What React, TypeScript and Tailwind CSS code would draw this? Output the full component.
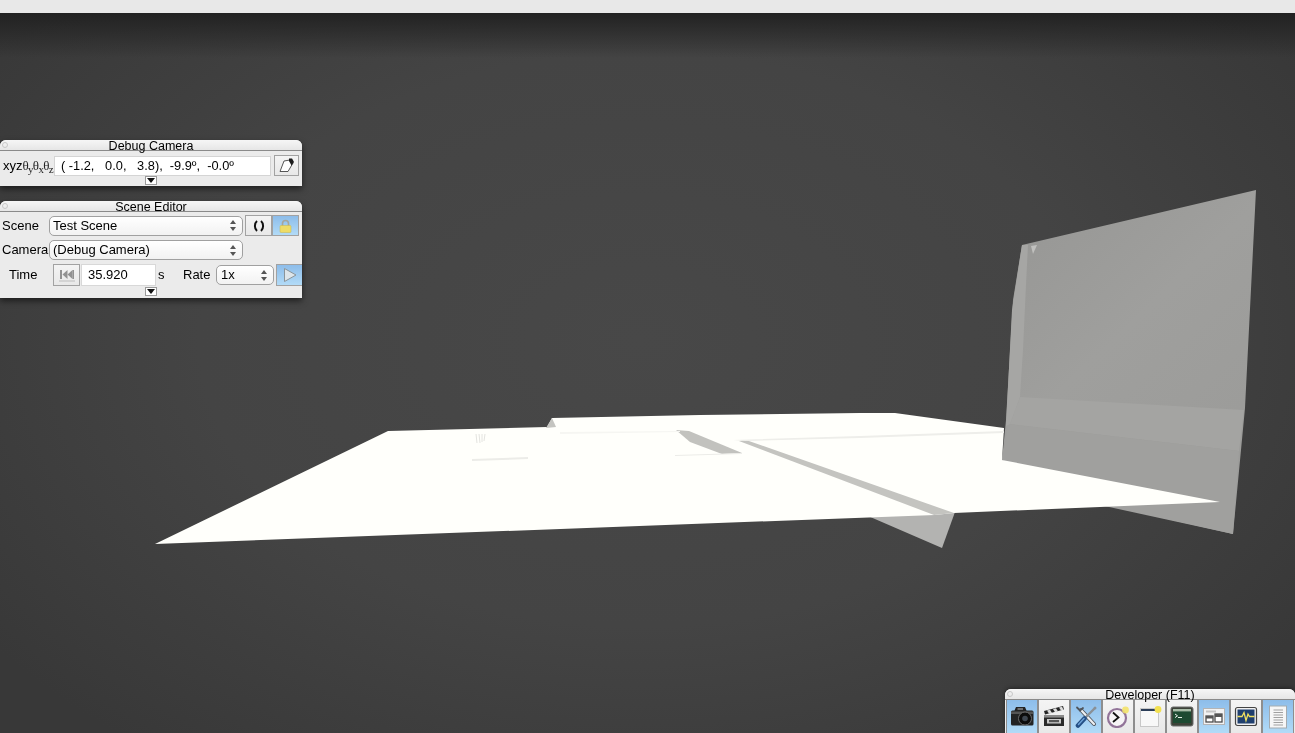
import React from "react";

const font = "font-['Liberation_Sans',Arial,sans-serif]";

function Scene() {
  return (
    <svg className="absolute left-0 top-0" width="1295" height="733" viewBox="0 0 1295 733">
      <defs>
        <linearGradient id="wall" x1="1040" y1="220" x2="1230" y2="420" gradientUnits="userSpaceOnUse">
          <stop offset="0" stopColor="#989896" />
          <stop offset="0.5" stopColor="#9f9f9d" />
          <stop offset="1" stopColor="#9c9c9a" />
        </linearGradient>
      </defs>
      {/* flaps under the floor */}
      <polygon points="868,516 955,512 942,548" fill="#b3b3b1" />
      <polygon points="1115,507 1222,501 1233,534" fill="#9c9c9a" />
      {/* wall */}
      <polygon points="1022,245 1256,190 1245,408 1233,534 1002,460 1006,420 1013,300" fill="url(#wall)" />
      <polygon points="1020,397 1244,410 1239,451 1010,424" fill="#a4a4a2" />
      <polygon points="1008,424 1239,451 1233,534 1100,505 1002,460" fill="#a0a09e" />
      <polygon points="1022,245 1028,245 1026,285 1023,350 1020,397 1010,424 1006,426 1012,310" fill="#a6a6a4" />
      <polygon points="1031,246 1037,245 1033,254" fill="#c0c0be" />
      {/* floor */}
      <polygon
        points="155,544 388,431 547,427 552,418 700,415 860,413 895,413 1004,428 1002,460 1220,502 1100,507 954,513 935,515"
        fill="#fffffb"
      />
      <polygon points="546,428 552,418 556,427" fill="#c4c4c0" />
      {/* creases */}
      <polygon points="676,430 689,431 742,453 722,454 690,442" fill="#c2c2be" />
      <polygon points="739,441 746,440 954,513 934,515" fill="#c4c4c0" />
      <polygon points="733,440 860,436 1004,431 1004,433 860,438 745,441" fill="#eeeeea" />
      <polygon points="472,459 528,457 528,459 472,461" fill="#ecece8" />
      <polygon points="675,455 742,453 742,454 675,456" fill="#ecece8" />
      <polygon points="560,432 680,431 680,432 560,434" fill="#f6f6f2" />
      <path d="M476 434 L477 443 M479 434 L480 443 M482 434 L482 442 M485 434 L484 441" stroke="#e4e4e0" strokeWidth="1" fill="none" />
    </svg>
  );
}

function TitleBar({ title }: { title: string }) {
  return (
    <div className="relative h-[11px] rounded-t-[6px] border-b border-[#8a8a8a] bg-gradient-to-b from-[#f6f6f6] to-[#e6e6e6] text-center text-[12.5px] leading-[12px] text-black">
      <span className="absolute left-[2px] top-[2px] h-[6px] w-[6px] rounded-full border border-[#c8c8c8]" />
      {title}
    </div>
  );
}

function Disclosure() {
  return (
    <div className="flex h-[9px] w-[12px] items-center justify-center border border-[#9a9a9a] bg-white">
      <svg width="8" height="5" viewBox="0 0 8 5">
        <polygon points="0,0 8,0 4,5" fill="#111" />
      </svg>
    </div>
  );
}

function Stepper() {
  return (
    <svg width="6" height="11" viewBox="0 0 6 11" className="shrink-0">
      <polygon points="3,0 6,4 0,4" fill="#555" />
      <polygon points="0,7 6,7 3,11" fill="#555" />
    </svg>
  );
}

function Select({ label, className }: { label: string; className: string }) {
  return (
    <div
      className={`flex h-[20px] items-center justify-between rounded-[5px] border border-[#a0a0a0] bg-gradient-to-b from-white to-[#f2f2f2] pl-[3px] pr-[6px] text-[13px] text-black ${className}`}
    >
      <span>{label}</span>
      <Stepper />
    </div>
  );
}

const blue = "bg-gradient-to-b from-[#8dbdea] to-[#b2dbf7]";
const plain = "bg-gradient-to-b from-[#f4f4f4] to-[#e8e8e8]";

function SmallButton({ on, className, children }: { on?: boolean; className: string; children: React.ReactNode }) {
  return (
    <div className={`flex items-center justify-center border border-[#a2a2a2] ${on ? blue : plain} ${className}`}>
      {children}
    </div>
  );
}

function DebugCamera() {
  return (
    <div className="absolute left-0 top-[140px] h-[46px] w-[302px] rounded-t-[6px] bg-[#ebebeb] shadow-[0_3px_6px_rgba(0,0,0,0.55)] blur-[0.4px]">
      <TitleBar title="Debug Camera" />
      <div className="flex h-[25px] items-center pl-[3px] pt-[4px]">
        <span className="w-[51px] whitespace-nowrap text-[13px] leading-none text-black">
          xyz
          <span className="font-['Liberation_Serif',serif] text-[13px] tracking-[-0.7px] text-[#222]">
            θ<sub className="text-[11px]">y</sub>θ<sub className="text-[11px]">x</sub>θ<sub className="text-[11px]">z</sub>
          </span>
        </span>
        <div className="flex h-[20px] w-[217px] items-center whitespace-pre border border-[#d4d4d4] bg-white pl-[6px] text-[12.8px] text-black">
          {"( -1.2,   0.0,   3.8),  -9.9º,  -0.0º"}
        </div>
        <SmallButton className="ml-[3px] h-[21px] w-[25px]">
          <svg width="18" height="15" viewBox="0 0 18 15">
            <polygon points="6,3 12,2 15,5 10,13.5 2,13.5" fill="#fff" stroke="#444" strokeWidth="0.9" />
            <polygon points="11,0.5 14,0.5 16,4 13.5,7.5 11,3" fill="#1c1c1c" />
          </svg>
        </SmallButton>
      </div>
      <div className="flex justify-center pr-[1px]">
        <Disclosure />
      </div>
    </div>
  );
}

function SceneEditor() {
  return (
    <div className="absolute left-0 top-[201px] h-[97px] w-[302px] rounded-t-[6px] bg-[#ebebeb] text-[13px] text-black shadow-[0_3px_6px_rgba(0,0,0,0.55)] blur-[0.4px]">
      <TitleBar title="Scene Editor" />
      <div className="flex items-center pt-[3px]">
        <span className="w-[49px] pl-[2px]">Scene</span>
        <Select label="Test Scene" className="w-[194px]" />
        <SmallButton className="ml-[2px] h-[21px] w-[27px]">
          <svg width="12" height="12" viewBox="0 0 12 12" fill="none" stroke="#111" strokeWidth="2">
            <path d="M4 1 C1.2 3.5 1.2 8.5 4 11" />
            <path d="M8 1 C10.8 3.5 10.8 8.5 8 11" />
          </svg>
        </SmallButton>
        <SmallButton on className="h-[21px] w-[27px]">
          <svg width="13" height="14" viewBox="0 0 13 14">
            <path d="M3.5 7 V4.5 a3 3 0 0 1 6 0 V7" fill="none" stroke="#a6a69c" strokeWidth="1.6" />
            <rect x="1" y="6.5" width="11" height="7" rx="1" fill="#eedc66" stroke="#cdb848" strokeWidth="0.5" />
          </svg>
        </SmallButton>
      </div>
      <div className="flex items-center pt-[4px]">
        <span className="w-[49px] pl-[2px]">Camera</span>
        <Select label="(Debug Camera)" className="w-[194px]" />
      </div>
      <div className="flex items-center pt-[4px]">
        <span className="w-[53px] pl-[9px]">Time</span>
        <SmallButton className="h-[22px] w-[27px]">
          <svg width="16" height="13" viewBox="0 0 16 13" fill="#929292">
            <rect x="1" y="1" width="2" height="9" />
            <polygon points="8.5,1 8.5,10 3.5,5.5" />
            <polygon points="13.5,1 13.5,10 8.5,5.5" />
            <rect x="13.5" y="1" width="1.5" height="9" />
            <rect x="0" y="11.5" width="16" height="1" fill="#bbb" />
          </svg>
        </SmallButton>
        <div className="ml-[1px] flex h-[22px] w-[75px] items-center border border-[#d8d8d8] bg-white pl-[6px]">35.920</div>
        <span className="ml-[2px] w-[25px]">s</span>
        <span className="w-[33px]">Rate</span>
        <Select label="1x" className="w-[58px] pl-[4px]" />
        <SmallButton on className="ml-[2px] h-[22px] w-[26px] border-r-0">
          <svg width="14" height="16" viewBox="0 0 14 16">
            <polygon points="1.5,1.5 13,8 1.5,14.5" fill="#dde5ea" stroke="#8a949a" strokeWidth="1" />
          </svg>
        </SmallButton>
      </div>
      <div className="flex justify-center pr-[1px] pt-[1px]">
        <Disclosure />
      </div>
    </div>
  );
}

const icons: { on: boolean; svg: React.ReactNode }[] = [
  {
    on: true,
    svg: (
      <svg width="24" height="23" viewBox="0 0 24 23">
        <path d="M6 2 h9 l1.5 3.5 H22 a1.5 1.5 0 0 1 1.5 1.5 V19 a1.5 1.5 0 0 1 -1.5 1.5 H2.5 A1.5 1.5 0 0 1 1 19 V7 A1.5 1.5 0 0 1 2.5 5.5 H4.5 Z" fill="#232323" />
        <rect x="1" y="6.5" width="22" height="2.5" fill="#555" />
        <circle cx="15" cy="13.5" r="6.5" fill="#0c0c0c" stroke="#6a6a6a" strokeWidth="1" />
        <circle cx="15" cy="13.5" r="2.8" fill="#3e4650" />
        <rect x="7.5" y="3" width="5.5" height="2" fill="#707070" />
      </svg>
    ),
  },
  {
    on: false,
    svg: (
      <svg width="24" height="23" viewBox="0 0 24 23">
        <polygon points="2,6 21,1 22,4.5 3,9.5" fill="#262626" />
        <polygon points="5,5.5 8,4.7 10,8 7,8.8" fill="#ddd" />
        <polygon points="11,4 14,3.2 16,6.5 13,7.2" fill="#ddd" />
        <polygon points="17,2.5 20,1.7 21.5,4.8 19,5.6" fill="#ddd" />
        <rect x="2" y="10" width="20" height="11" fill="#2a2a2a" />
        <rect x="2" y="10" width="20" height="2.6" fill="#8a8a8a" />
        <rect x="5" y="14" width="14" height="4.5" fill="#c8c8c8" />
        <rect x="7" y="15" width="10" height="2.2" fill="#555" />
      </svg>
    ),
  },
  {
    on: true,
    svg: (
      <svg width="24" height="23" viewBox="0 0 24 23" fill="none" strokeLinecap="round">
        <path d="M7 5 L20 19" stroke="#50555c" strokeWidth="4" />
        <path d="M7 5 L20 19" stroke="#eef0f2" strokeWidth="2.2" />
        <path d="M3 2.5 l3 3 l3 -2.5" stroke="#50555c" strokeWidth="1.8" />
        <path d="M20 4 L11 13" stroke="#8a9096" strokeWidth="2.4" />
        <path d="M10.5 13.5 L4 20.5" stroke="#244f85" strokeWidth="4.6" />
        <path d="M10 13.5 L4.5 19.5" stroke="#6ea3d8" strokeWidth="1.4" />
        <circle cx="21" cy="3" r="1.5" fill="#8a9096" />
      </svg>
    ),
  },
  {
    on: false,
    svg: (
      <svg width="24" height="23" viewBox="0 0 24 23" fill="none">
        <circle cx="11" cy="13" r="9" fill="#f6f4f6" stroke="#927499" strokeWidth="2.2" />
        <path d="M7 7.5 L12.5 12.5 L7 17" stroke="#111" strokeWidth="1.8" />
        <circle cx="19.5" cy="5" r="3.4" fill="#f3e26a" opacity="0.9" />
      </svg>
    ),
  },
  {
    on: false,
    svg: (
      <svg width="24" height="23" viewBox="0 0 24 23">
        <rect x="2.5" y="3.5" width="18" height="18" fill="#f8f8f8" stroke="#c8c8c8" />
        <rect x="3" y="4" width="17" height="2" fill="#2c3e58" />
        <circle cx="20" cy="4.5" r="3.4" fill="#f2e050" />
      </svg>
    ),
  },
  {
    on: false,
    svg: (
      <svg width="24" height="23" viewBox="0 0 24 23">
        <rect x="1" y="2" width="22" height="19" rx="2" fill="#3c4238" stroke="#6c6c6c" />
        <rect x="3" y="4" width="18" height="14" fill="#1d4a32" />
        <rect x="3" y="4" width="18" height="2.4" fill="#a8bca8" />
        <path d="M5 9 l2.5 1.8 L5 12.6" stroke="#e8f0e8" strokeWidth="1" fill="none" />
        <rect x="8" y="12" width="4" height="1" fill="#e8f0e8" />
      </svg>
    ),
  },
  {
    on: true,
    svg: (
      <svg width="24" height="23" viewBox="0 0 24 23">
        <rect x="1.5" y="3.5" width="21" height="16" fill="#f2f2f2" stroke="#b4b4b4" />
        <rect x="4" y="5.5" width="10" height="2" fill="#c4c4c4" />
        <rect x="4" y="11" width="7" height="6" fill="#fff" stroke="#4c4c4c" strokeWidth="1.3" />
        <rect x="4" y="11" width="7" height="2.5" fill="#555" />
        <rect x="13" y="9" width="7" height="8" fill="#fff" stroke="#4c4c4c" strokeWidth="1.3" />
        <rect x="13" y="9" width="7" height="3" fill="#555" />
      </svg>
    ),
  },
  {
    on: false,
    svg: (
      <svg width="24" height="23" viewBox="0 0 24 23">
        <rect x="1.5" y="2.5" width="21" height="18" rx="2" fill="#f0f0f0" stroke="#444" strokeWidth="1.2" />
        <rect x="3.5" y="4.5" width="17" height="14" fill="#1f3f6e" />
        <path d="M3.5 11.5 H8 L10 7.5 L12 15.5 L14 9 L15.5 11.5 H20.5" stroke="#f0e060" strokeWidth="1.3" fill="none" />
      </svg>
    ),
  },
  {
    on: true,
    svg: (
      <svg width="24" height="25" viewBox="0 0 24 25">
        <rect x="3.5" y="2" width="17" height="22" fill="#f6f6f6" stroke="#a4abb0" />
        <path d="M7.5 6 H17 M7.5 8.5 H17 M7.5 11 H17 M7.5 13.5 H17 M7.5 16 H17 M7.5 18.5 H17 M7.5 21 H17" stroke="#a0a0a0" strokeWidth="1" />
      </svg>
    ),
  },
];

function Developer() {
  return (
    <div className="absolute left-[1005px] top-[689px] h-[44px] w-[290px] rounded-t-[6px] bg-[#ebebeb] shadow-[0_-1px_4px_rgba(0,0,0,0.4)] blur-[0.4px]">
      <TitleBar title="Developer (F11)" />
      <div className="flex h-[33px] pl-[1px]">
        {icons.map((icon, i) => (
          <div
            key={i}
            className={`flex h-[33px] w-[32px] items-center justify-center border-x border-[#8e8e8e] ${icon.on ? blue : plain}`}
          >
            {icon.svg}
          </div>
        ))}
      </div>
    </div>
  );
}

export default function App() {
  return (
    <div
      className={`relative h-[733px] w-[1295px] overflow-hidden bg-[radial-gradient(ellipse_800px_520px_at_640px_340px,#484848_0%,#444444_55%,#383838_100%)] ${font}`}
    >
      <div className="relative z-10 h-[13px] bg-[#e8e8e8]" />
      <div className="h-[45px] bg-gradient-to-b from-[#222222] to-transparent" />
      <Scene />
      <DebugCamera />
      <SceneEditor />
      <Developer />
    </div>
  );
}
